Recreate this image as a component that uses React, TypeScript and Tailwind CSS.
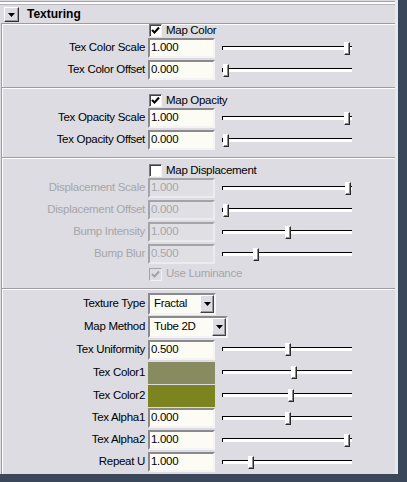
import React from "react";

const PANEL = "bg-[#dcdce2]";

function Slider({ pos }: { pos: number }) {
  return (
    <div className="relative ml-[7px] h-[13px] w-[130px] shrink-0">
      <div className="absolute left-0 top-[4px] h-[4px] w-[130px] border-l border-t border-black bg-white" />
      <div
        className="absolute top-0 h-[13px] w-[6px] border border-t-white border-l-white border-r-[#2a2a2a] border-b-[#2a2a2a] bg-white shadow-[inset_-1px_-1px_0_#8c8c90]"
        style={{ left: pos }}
      />
    </div>
  );
}

function Field({ value, disabled }: { value: string; disabled?: boolean }) {
  return (
    <div
      className={
        disabled
          ? "ml-[3px] flex h-[20px] w-[67px] shrink-0 items-center border-2 border-t-[#a4a4a8] border-l-[#a4a4a8] border-r-[#ececf0] border-b-[#ececf0] bg-[#e0e0e4] pl-[1px] text-[#a6a6aa]"
          : "ml-[3px] flex h-[20px] w-[67px] shrink-0 items-center border-2 border-t-[#8a8a8e] border-l-[#8a8a8e] border-r-[#f4f4f4] border-b-[#f4f4f4] bg-[#fcfcf4] pl-[1px] text-black"
      }
    >
      {value}
    </div>
  );
}

function Label({ text, disabled }: { text: string; disabled?: boolean }) {
  return (
    <div
      className={
        disabled
          ? "w-[143px] shrink-0 whitespace-nowrap text-right text-[#a6a6aa]"
          : "w-[143px] shrink-0 whitespace-nowrap text-right text-black"
      }
    >
      {text}
    </div>
  );
}

function Row({
  label,
  value,
  pos,
  disabled,
}: {
  label: string;
  value: string;
  pos: number;
  disabled?: boolean;
}) {
  return (
    <div className="flex h-[22px] items-center">
      <Label text={label} disabled={disabled} />
      <Field value={value} disabled={disabled} />
      <Slider pos={pos} />
    </div>
  );
}

function Check({ on, disabled }: { on: boolean; disabled?: boolean }) {
  return (
    <div
      className={
        disabled
          ? "flex h-[13px] w-[13px] shrink-0 items-center justify-center border border-t-[#a4a4a8] border-l-[#a4a4a8] border-r-[#f0f0f2] border-b-[#f0f0f2] bg-[#dcdce2]"
          : "flex h-[13px] w-[13px] shrink-0 items-center justify-center border border-t-[#7a7a7e] border-l-[#7a7a7e] border-r-[#f4f4f4] border-b-[#f4f4f4] bg-white shadow-[inset_1px_1px_0_#404040]"
      }
    >
      {on && (
        <svg width="9" height="9" viewBox="0 0 9 9">
          <polyline
            points="1,4 3.5,6.5 8,1.5"
            fill="none"
            stroke={disabled ? "#a4a4a8" : "#000"}
            strokeWidth="2"
          />
        </svg>
      )}
    </div>
  );
}

function CheckRow({
  text,
  on,
  disabled,
  className,
}: {
  text: string;
  on: boolean;
  disabled?: boolean;
  className: string;
}) {
  return (
    <div className={className}>
      <Check on={on} disabled={disabled} />
      <span className={disabled ? "ml-[4px] text-[#a6a6aa]" : "ml-[4px] text-black"}>{text}</span>
    </div>
  );
}

function Tri() {
  return (
    <svg width="7" height="4" viewBox="0 0 7 4">
      <polygon points="0,0 7,0 3.5,4" fill="#000" />
    </svg>
  );
}

function Dropdown({ value, wide }: { value: string; wide?: boolean }) {
  return (
    <div
      className={
        wide
          ? "ml-[3px] flex h-[22px] w-[80px] shrink-0 items-center border-2 border-t-[#8a8a8e] border-l-[#8a8a8e] border-r-[#f4f4f4] border-b-[#f4f4f4] bg-[#fcfcf4]"
          : "ml-[3px] flex h-[22px] w-[68px] shrink-0 items-center border-2 border-t-[#8a8a8e] border-l-[#8a8a8e] border-r-[#f4f4f4] border-b-[#f4f4f4] bg-[#fcfcf4]"
      }
    >
      <span className="flex-1 pl-[4px] text-black">{value}</span>
      <div className="flex h-[18px] w-[14px] items-center justify-center border border-t-white border-l-white border-r-[#404040] border-b-[#404040] bg-[#dcdce2] shadow-[inset_-1px_-1px_0_#9a9aa0]">
        <Tri />
      </div>
    </div>
  );
}

function Swatch({ color }: { color: string }) {
  return <div className={"ml-[3px] h-[22px] w-[67px] shrink-0 " + color} />;
}

export default function App() {
  return (
    <div className="h-[482px] w-[407px] overflow-hidden bg-[#3a475b] font-['Liberation_Sans',Arial,sans-serif] text-[11.5px] tracking-[-0.3px]">
      <div className={"flex h-[474px] w-[398px] flex-col border-r-[3px] border-[#e8e8ec] " + PANEL}>
        {/* header */}
        <div className="mt-[1px] flex h-[22px] items-center border-t border-[#a0a0a6] pl-[4px] shadow-[inset_0_2px_0_#ffffff,inset_0_3px_0_#b4b4ba]">
          <div className="mt-[4px] flex h-[15px] w-[15px] items-center justify-center border border-t-white border-l-white border-r-[#303030] border-b-[#303030] bg-[#dcdce2] shadow-[inset_-1px_-1px_0_#9a9aa0]">
            <Tri />
          </div>
          <span className="ml-[8px] mt-[2px] text-[12px] font-bold tracking-normal text-black">Texturing</span>
        </div>

        {/* section 1 */}
        <div className="ml-[1px] flex h-[64px] flex-col border-l border-t border-[#9c9ca2] shadow-[inset_1px_1px_0_#ffffff]">
          <CheckRow text="Map Color" on className="flex h-[13px] items-center pl-[147px]" />
          <Row label="Tex Color Scale" value="1.000" pos={122} />
          <Row label="Tex Color Offset" value="0.000" pos={1} />
        </div>

        {/* section 2 */}
        <div className="ml-[1px] flex h-[70px] flex-col border-l border-t border-[#9c9ca2] pt-[6px] shadow-[inset_1px_1px_0_#ffffff]">
          <CheckRow text="Map Opacity" on className="flex h-[13px] items-center pl-[147px]" />
          <Row label="Tex Opacity Scale" value="1.000" pos={122} />
          <Row label="Tex Opacity Offset" value="0.000" pos={1} />
        </div>

        {/* section 3 */}
        <div className="ml-[1px] flex h-[131px] flex-col border-l border-t border-[#9c9ca2] pt-[6px] shadow-[inset_1px_1px_0_#ffffff]">
          <CheckRow text="Map Displacement" on={false} className="flex h-[13px] items-center pl-[147px]" />
          <Row label="Displacement Scale" value="1.000" pos={123} disabled />
          <Row label="Displacement Offset" value="0.000" pos={1} disabled />
          <Row label="Bump Intensity" value="1.000" pos={63} disabled />
          <Row label="Bump Blur" value="0.500" pos={31} disabled />
          <CheckRow text="Use Luminance" on disabled className="flex h-[18px] items-center pl-[147px]" />
        </div>

        {/* section 4 */}
        <div className="ml-[1px] flex flex-1 flex-col border-l border-t border-[#9c9ca2] pt-[3px] shadow-[inset_1px_1px_0_#ffffff]">
          <div className="flex h-[23px] items-center">
            <Label text="Texture Type" />
            <Dropdown value="Fractal" />
          </div>
          <div className="flex h-[23px] items-center">
            <Label text="Map Method" />
            <Dropdown value="Tube 2D" wide />
          </div>
          <div className="flex h-[23px] items-center">
            <Label text="Tex Uniformity" />
            <Field value="0.500" />
            <Slider pos={63} />
          </div>
          <div className="flex h-[23px] items-center">
            <Label text="Tex Color1" />
            <Swatch color="bg-[#888b60]" />
            <Slider pos={69} />
          </div>
          <div className="flex h-[23px] items-center">
            <Label text="Tex Color2" />
            <Swatch color="bg-[#7c8420]" />
            <Slider pos={66} />
          </div>
          <Row label="Tex Alpha1" value="0.000" pos={63} />
          <Row label="Tex Alpha2" value="1.000" pos={122} />
          <Row label="Repeat U" value="1.000" pos={26} />
        </div>
      </div>
    </div>
  );
}
